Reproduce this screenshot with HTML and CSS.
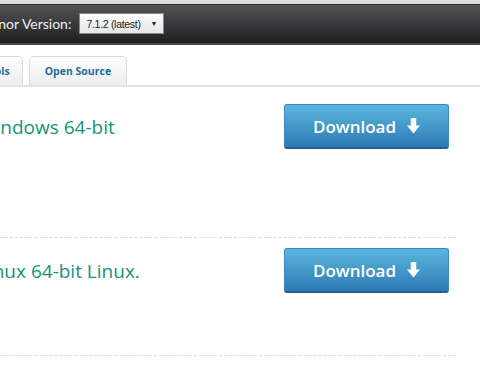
FILE: index.html
```html
<!DOCTYPE html>
<html lang="en">
<head>
    <meta charset="UTF-8">
    <title>Downloads</title>
    <link rel="stylesheet" href="styles.css">
</head>
<body>
    <div class="page">
        <div class="topbar">
            <div class="version">
                <span class="version-label">Minor Version:</span>
                <span class="select">7.1.2 (latest) <span class="caret">&#9660;</span></span>
            </div>
        </div>

        <ul class="tabs">
            <li class="tab">Developer Tools</li>
            <li class="tab">Open Source</li>
        </ul>

        <div class="downloads">
            <div class="item">
                <div class="item-name">Windows 64-bit</div>
                <a class="btn" href="#">Download
                    <svg class="icon" width="13" height="16" viewBox="0 0 13 16"><path d="M3.8 0h5.4v7.5H13L6.5 15.5 0 7.5h3.8z" fill="#fff"/></svg>
                </a>
            </div>
            <div class="item">
                <div class="item-name">Linux 64-bit Linux.</div>
                <a class="btn" href="#">Download
                    <svg class="icon" width="13" height="16" viewBox="0 0 13 16"><path d="M3.8 0h5.4v7.5H13L6.5 15.5 0 7.5h3.8z" fill="#fff"/></svg>
                </a>
            </div>
        </div>
    </div>
</body>
</html>
```

FILE: styles.css
```css
html, body {
    margin: 0;
    padding: 0;
    background: #fff;
    overflow: hidden;
}
.page {
    width: 520px;
    margin-left: -40px;
    font-family: Lato, "Open Sans", sans-serif;
}
.topbar {
    border-top: 4px solid #dcdcdc;
    height: 39px;
    background: linear-gradient(#54565a, #1e1e1f);
    border-bottom: 2px solid #4a4a4a;
    box-shadow: inset 0 1px 0 #2c2c2c;
    display: flex;
    align-items: center;
}
.version {
    display: flex;
    align-items: center;
    padding-left: 22px;
    color: #f0f0f0;
    font-size: 14px;
}
.version-label {
    margin-right: 8px;
}
.select {
    display: inline-flex;
    align-items: center;
    height: 19px;
    padding: 0 6px;
    background: linear-gradient(#fdfdfd, #e6e6e6);
    border: 1px solid #888;
    color: #222;
    font-size: 10.5px;
    font-family: "Liberation Sans", sans-serif;
    letter-spacing: -0.3px;
}
.caret {
    font-size: 7px;
    margin-left: 10px;
}
.tabs {
    list-style: none;
    margin: 11px 0 0;
    padding: 0;
    display: flex;
    gap: 6px;
    border-bottom: 2px solid #e3e3e3;
}
.tab {
    height: 28px;
    padding: 0 15px;
    display: flex;
    align-items: center;
    background: linear-gradient(#fff, #ececec);
    border: 1px solid #dcdcdc;
    border-bottom: none;
    border-radius: 5px 5px 0 0;
    font-size: 10.5px;
    font-weight: bold;
    color: #1f6d9c;
    font-family: "Open Sans", sans-serif;
}
.tab:first-child {
    margin-left: -50px;
    padding-right: 12px;
}
.downloads {
    width: 496px;
}
.item {
    padding: 10px 0 62px 18px;
    display: flex;
    align-items: center;
    justify-content: space-between;
    border-bottom: 1px dashed #d8d8d8;
}
.item:first-child {
    padding-top: 17px;
    padding-bottom: 88px;
}
.item-name {
    font-size: 19px;
    color: #17937c;
    font-family: "Open Sans", sans-serif;
}
.btn {
    margin-right: 7px;
    width: 163px;
    height: 42px;
    display: flex;
    align-items: center;
    justify-content: center;
    gap: 11px;
    color: #fff;
    text-decoration: none;
    font-size: 17px;
    font-weight: 600;
    font-family: "Open Sans", sans-serif;
    background: linear-gradient(#5ab6de, #2f7ab5);
    border: 1px solid #3a8ac0;
    border-bottom: 2px solid #245f99;
    border-radius: 3px;
}
.icon {
    display: block;
}
```
